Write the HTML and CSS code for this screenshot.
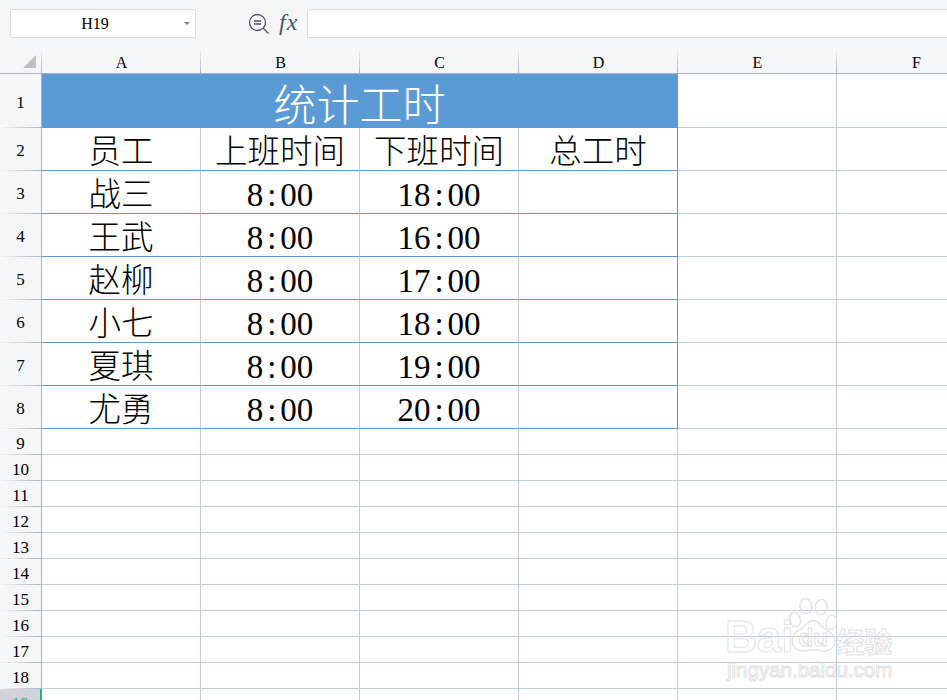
FILE: index.html
```html
<!DOCTYPE html>
<html lang="zh">
<head>
<meta charset="utf-8">
<title>统计工时</title>
<link rel="stylesheet" href="styles.css">
</head>
<body>
<div class="app">
  <div class="toolbar">
    <div class="namebox"><span class="name">H19</span><span class="caret"></span></div>
    <div class="tools">
      <svg class="zoom-icon" width="22" height="22" viewBox="0 0 22 22" fill="none" stroke="#4a5468" stroke-width="1.3"><circle cx="9.5" cy="9.5" r="8"/><path d="M15.3 15.3l5.2 5.2M6 8h7M6 11h7"/></svg>
      <span class="fx">fx</span>
    </div>
    <div class="formula"></div>
  </div>
  <div class="sheet">
    <div class="row colhead"><div class="corner"><span class="tri"></span></div><div class="ch">A</div><div class="ch">B</div><div class="ch">C</div><div class="ch">D</div><div class="ch">E</div><div class="ch">F</div></div>
    <div class="row r1"><div class="rh">1</div><div class="c title">统计工时</div><div class="c"></div><div class="c"></div></div>
    <div class="row r2 data"><div class="rh">2</div><div class="c">员工</div><div class="c">上班时间</div><div class="c">下班时间</div><div class="c end">总工时</div><div class="c"></div><div class="c"></div></div>
    <div class="row r2 data"><div class="rh">3</div><div class="c">战三</div><div class="c num">8<i>:</i>00</div><div class="c num">18<i>:</i>00</div><div class="c end"></div><div class="c"></div><div class="c"></div></div>
    <div class="row r2 data"><div class="rh">4</div><div class="c">王武</div><div class="c num">8<i>:</i>00</div><div class="c num">16<i>:</i>00</div><div class="c end"></div><div class="c"></div><div class="c"></div></div>
    <div class="row r2 data"><div class="rh">5</div><div class="c">赵柳</div><div class="c num">8<i>:</i>00</div><div class="c num">17<i>:</i>00</div><div class="c end"></div><div class="c"></div><div class="c"></div></div>
    <div class="row r2 data"><div class="rh">6</div><div class="c">小七</div><div class="c num">8<i>:</i>00</div><div class="c num">18<i>:</i>00</div><div class="c end"></div><div class="c"></div><div class="c"></div></div>
    <div class="row r2 data"><div class="rh">7</div><div class="c">夏琪</div><div class="c num">8<i>:</i>00</div><div class="c num">19<i>:</i>00</div><div class="c end"></div><div class="c"></div><div class="c"></div></div>
    <div class="row r2 data"><div class="rh">8</div><div class="c">尤勇</div><div class="c num">8<i>:</i>00</div><div class="c num">20<i>:</i>00</div><div class="c end"></div><div class="c"></div><div class="c"></div></div>
    <div class="row r3"><div class="rh">9</div><div class="c"></div><div class="c"></div><div class="c"></div><div class="c"></div><div class="c"></div><div class="c"></div></div>
    <div class="row r3"><div class="rh">10</div><div class="c"></div><div class="c"></div><div class="c"></div><div class="c"></div><div class="c"></div><div class="c"></div></div>
    <div class="row r3"><div class="rh">11</div><div class="c"></div><div class="c"></div><div class="c"></div><div class="c"></div><div class="c"></div><div class="c"></div></div>
    <div class="row r3"><div class="rh">12</div><div class="c"></div><div class="c"></div><div class="c"></div><div class="c"></div><div class="c"></div><div class="c"></div></div>
    <div class="row r3"><div class="rh">13</div><div class="c"></div><div class="c"></div><div class="c"></div><div class="c"></div><div class="c"></div><div class="c"></div></div>
    <div class="row r3"><div class="rh">14</div><div class="c"></div><div class="c"></div><div class="c"></div><div class="c"></div><div class="c"></div><div class="c"></div></div>
    <div class="row r3"><div class="rh">15</div><div class="c"></div><div class="c"></div><div class="c"></div><div class="c"></div><div class="c"></div><div class="c"></div></div>
    <div class="row r3"><div class="rh">16</div><div class="c"></div><div class="c"></div><div class="c"></div><div class="c"></div><div class="c"></div><div class="c"></div></div>
    <div class="row r3"><div class="rh">17</div><div class="c"></div><div class="c"></div><div class="c"></div><div class="c"></div><div class="c"></div><div class="c"></div></div>
    <div class="row r3"><div class="rh">18</div><div class="c"></div><div class="c"></div><div class="c"></div><div class="c"></div><div class="c"></div><div class="c"></div></div>
    <div class="row r3 active"><div class="rh">19</div><div class="c"></div><div class="c"></div><div class="c"></div><div class="c"></div><div class="c"></div><div class="c"></div></div>
  </div>
  <div class="watermark">
    <div class="wm-top">
      <span class="wm-bai">Bai</span>
      <span class="wm-paw">
        <svg width="52" height="56" viewBox="0 0 56 62" fill="none" stroke="#e2e2e2" stroke-width="1.6"><ellipse cx="19" cy="9" rx="6.5" ry="8.5" transform="rotate(-8 19 9)"/><ellipse cx="36" cy="10" rx="6.5" ry="8.5" transform="rotate(10 36 10)"/><ellipse cx="7" cy="24" rx="6" ry="8" transform="rotate(-18 7 24)"/><ellipse cx="47" cy="27" rx="6" ry="8" transform="rotate(14 47 27)"/><path d="M27 25c-6 0-8 6-13 9-6 3-11 7-10 15 1 9 10 11 17 9 5-1 9-1 14 0 8 2 15-1 16-9 1-7-4-11-10-14-6-3-7-10-14-10z"/></svg>
        <span class="wm-du">du</span>
      </span>
      <span class="wm-cn">经验</span>
    </div>
    <div class="wm-url">jingyan.baidu.com</div>
  </div>
</div>
</body>
</html>
```

FILE: styles.css
```css
* { box-sizing: border-box; }
html, body { margin: 0; padding: 0; background: #f5f6f8; }
body { width: 947px; height: 700px; overflow: hidden; font-family: "Liberation Serif", "Noto Sans CJK SC", serif; color: #000; }
.app { position: relative; width: 947px; height: 700px; overflow: hidden; }

.toolbar { height: 48px; display: flex; align-items: flex-start; padding: 9px 0 0 10px; }
.namebox { width: 186px; height: 29px; flex: none; background: #fff; border: 1px solid #dcdde0; border-radius: 2px; display: flex; align-items: center; position: relative; }
.name { flex: 1; text-align: center; font-size: 16px; padding-right: 16px; padding-top: 1px; color: #000; }
.caret { position: absolute; right: 5px; top: 12px; width: 0; height: 0; border-left: 3.5px solid transparent; border-right: 3.5px solid transparent; border-top: 3.5px solid #7d828c; }
.tools { width: 111px; flex: none; display: flex; align-items: center; height: 29px; padding-left: 52px; gap: 9px; }
.fx { font-style: italic; font-size: 24px; color: #4a5468; font-family: "Liberation Serif", serif; letter-spacing: 1px; position: relative; top: -1px; }
.formula { flex: 1; height: 29px; background: #fff; border: 1px solid #dcdde0; border-right: 0; border-radius: 2px 0 0 2px; }

.sheet { width: 995px; }
.row { display: grid; grid-template-columns: 42px repeat(6, 159px); grid-template-rows: minmax(0, 1fr); }
.colhead { height: 26px; border-bottom: 1px solid #aab2c6; }
.corner { position: relative; }
.tri { position: absolute; right: 6px; bottom: 5px; width: 0; height: 0; border-left: 13px solid transparent; border-bottom: 13px solid #bdbdbd; }
.corner, .ch { background-image: linear-gradient(to bottom, transparent, #aab2c6); background-size: 1px 100%; background-position: right top; background-repeat: no-repeat; }
.ch { font-size: 16px; line-height: 20px; padding-top: 5px; text-align: center; color: #000; }

.rh { background-color: #f5f6f8; border-right: 1px solid #aab2c6; display: flex; align-items: center; justify-content: center; font-size: 17px; line-height: 20px; padding-top: 3px; color: #000; background-image: linear-gradient(to right, transparent, #aab2c6); background-size: 100% 1px; background-position: left bottom; background-repeat: no-repeat; }
.c { background: #fff; border-right: 1px solid #c2cbe0; border-bottom: 1px solid #c2cbe0; display: flex; align-items: center; justify-content: center; font-size: 32.5px; font-family: "Noto Sans CJK SC", "Liberation Serif", serif; font-weight: 300; color: #000; white-space: nowrap; min-width: 0; line-height: 32px; }
.num { font-family: "Liberation Serif", serif; font-weight: 400; padding-top: 5px; font-size: 33px; }
.num i { font-style: normal; width: 17px; text-align: center; }

.r1 { height: 54px; grid-template-columns: 42px 636px repeat(2, 159px); }
.r2 { height: 43px; }
.r3 { height: 26px; }
.title { background: #5b9bd5; color: #fff; font-size: 43px; line-height: 46px; padding-top: 2px; border-right: 1px solid #5b9bd5; border-bottom: 0; }
.data .c:nth-child(-n+5) { border-bottom-color: #5b9bd5; }
.data .end { border-right-color: #5b9bd5; }

.active .rh { background: #d0d3d9; border-right: 2px solid #1fb27d; color: #1fb27d; background-image: none; }

.watermark { position: absolute; left: 727px; top: 598px; width: 172px; pointer-events: none; }
.wm-top { display: flex; align-items: flex-end; height: 58px; }
.wm-bai { font-family: "Liberation Sans", sans-serif; font-weight: 700; font-size: 44px; line-height: 44px; color: transparent; -webkit-text-stroke: 1px #e2e2e2; margin-bottom: -3px; margin-left: -2px; }
.wm-paw { position: relative; width: 50px; flex: none; height: 58px; margin-left: -3px; }
.wm-paw svg { position: absolute; left: -2px; top: 0; }
.wm-du { position: absolute; left: 8px; top: 28px; font-family: "Liberation Sans", sans-serif; font-weight: 700; font-size: 24px; line-height: 24px; color: transparent; -webkit-text-stroke: 1px #dedede; }
.wm-cn { font-family: "Noto Sans CJK SC", sans-serif; font-weight: 700; font-size: 28px; line-height: 36px; color: transparent; -webkit-text-stroke: 1px #e2e2e2; white-space: nowrap; margin-left: -4px; margin-bottom: -3px; }
.wm-url { font-family: "Liberation Sans", sans-serif; font-size: 20.5px; line-height: 22px; margin-top: 3px; color: transparent; -webkit-text-stroke: 1px #e2e2e2; white-space: nowrap; }
```
